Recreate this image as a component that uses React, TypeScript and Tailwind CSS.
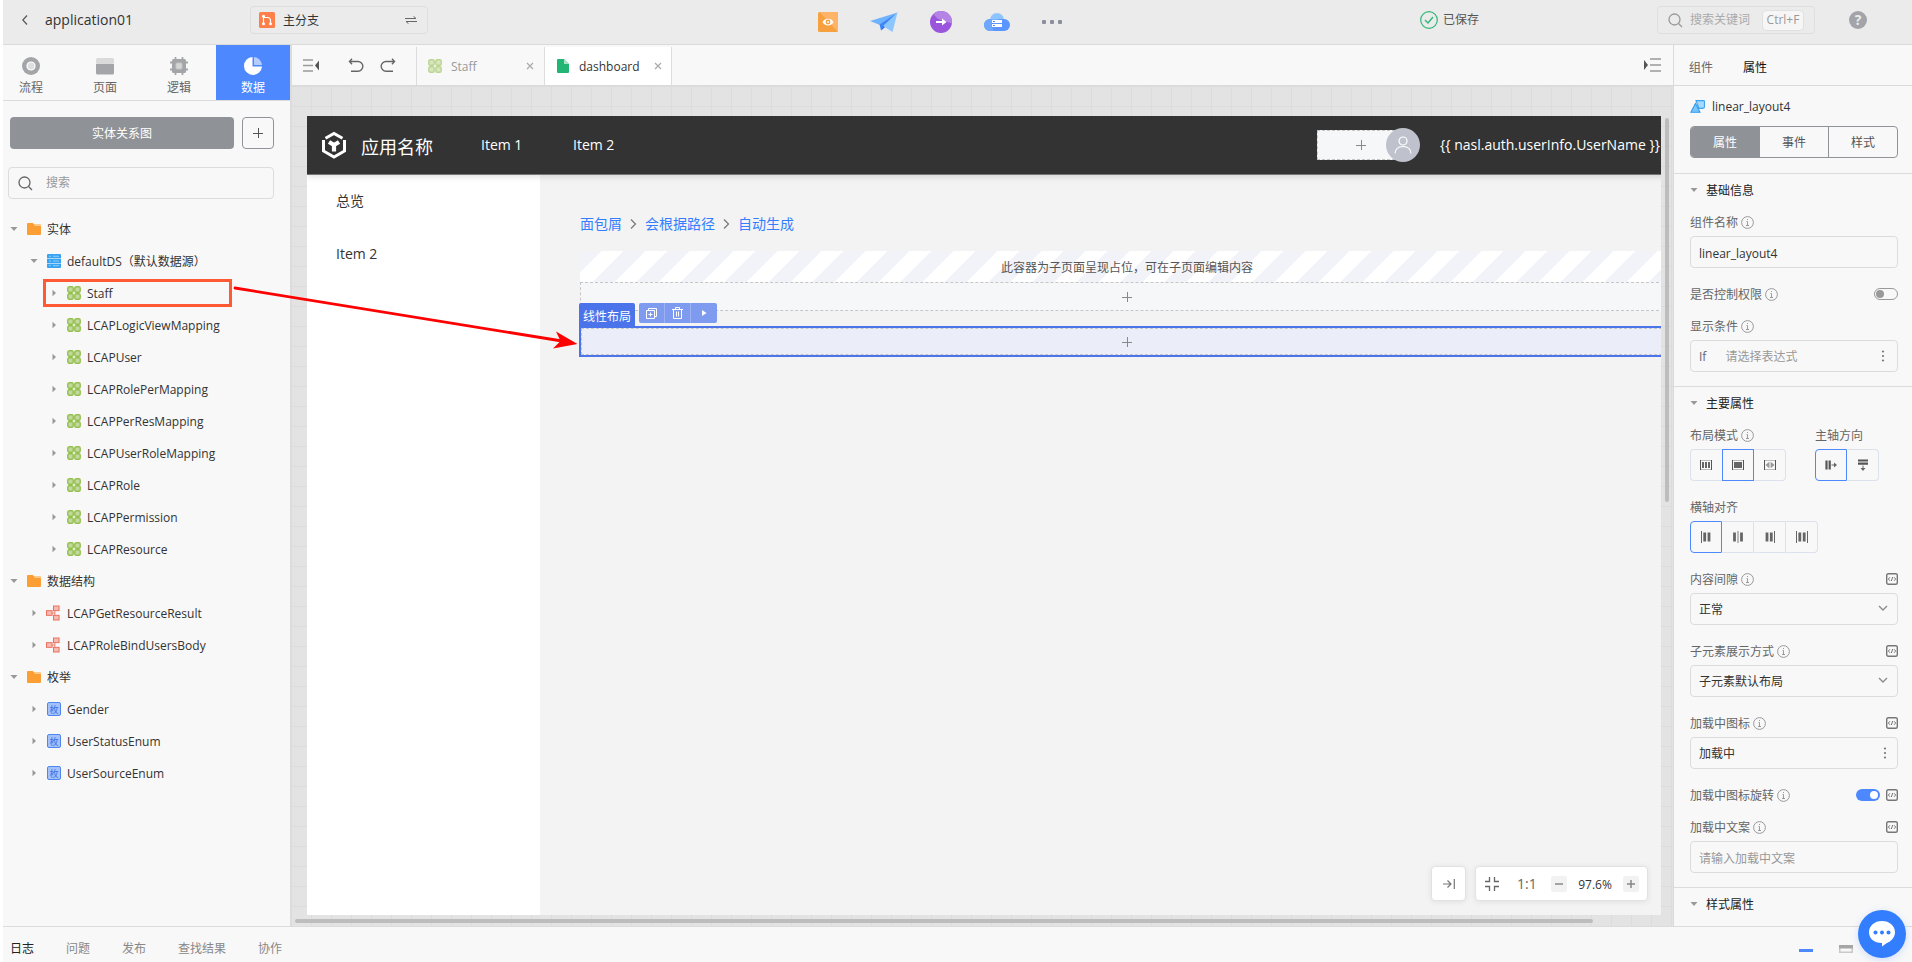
import type { ReactNode } from 'react'

type IconProps = { className?: string }

/* ---------- icons ---------- */

function EntityIcon({ className = '' }: IconProps) {
  return (
    <svg width="14" height="14" viewBox="0 0 14 14" className={`shrink-0 ${className}`}>
      {[0.8, 7.8].map((y) =>
        [0.8, 7.8].map((x) => (
          <rect key={`${x}-${y}`} x={x} y={y} width="5.4" height="5.4" rx="1.5" fill="#c3d9a0" stroke="#94bf4c" strokeWidth="1.4" />
        )),
      )}
    </svg>
  )
}

function FolderIcon() {
  return (
    <svg width="14" height="14" viewBox="0 0 14 14" className="shrink-0">
      <path d="M6 2h7a1 1 0 0 1 1 1v4H6z" fill="#fdc98a" />
      <path d="M0 2a1 1 0 0 1 1-1h5l2 3h5a1 1 0 0 1 1 1v7a1 1 0 0 1-1 1H1a1 1 0 0 1-1-1z" fill="#fb9e33" />
    </svg>
  )
}

function DatabaseIcon() {
  return (
    <svg width="14" height="14" viewBox="0 0 14 14" className="shrink-0">
      <rect width="14" height="14" rx="1" fill="#36a3f3" />
      <path d="M0 4.5h14M0 9.5h14" stroke="#a9d8fb" />
      <path d="M2 2.3h2M2 7h2M2 11.7h2M6 2.3h6M6 7h6M6 11.7h6" stroke="#8fcbf9" strokeWidth="1" />
    </svg>
  )
}

function StructIcon() {
  return (
    <svg width="14" height="16" viewBox="0 0 15 16" className="-ml-px shrink-0">
      <path d="M6 8h3.5M9.5 3.5v9M8 3.5h2M8 12.5h2" stroke="#ee7b6c" fill="none" />
      <g fill="#f7b9b0" stroke="#ea6a59">
        <rect x=".5" y="5.5" width="6" height="5" />
        <rect x="8" y=".5" width="6" height="5" />
        <rect x="8" y="10.5" width="6" height="5" />
      </g>
    </svg>
  )
}

function EnumIcon() {
  return (
    <span className="flex size-3.5 shrink-0 items-center justify-center rounded-xs border border-[#4e86f2] bg-[#a5c1f8] text-[9px] leading-none text-[#3472ee]">
      枚
    </span>
  )
}

function Caret({ open }: { open: boolean }) {
  return (
    <svg width="8" height="8" viewBox="0 0 8 8" className="shrink-0" fill="#999">
      {open ? <path d="M.5 2h7L4 6z" /> : <path d="M2.5 .8v6.4L6 4z" />}
    </svg>
  )
}

function InfoIcon() {
  return (
    <svg width="13" height="13" viewBox="0 0 13 13" className="shrink-0" fill="none" stroke="#8f8f8f">
      <circle cx="6.5" cy="6.5" r="5.9" strokeWidth=".9" />
      <path d="M5.5 5.5h1v3.8M5 9.5h3M6 3.5h1" strokeWidth=".9" />
    </svg>
  )
}

function CodeIcon() {
  return (
    <svg width="12" height="12" viewBox="0 0 12 12" className="shrink-0" fill="none" stroke="#777">
      <rect x=".7" y=".7" width="10.6" height="10.6" rx="1.5" strokeWidth="1.4" />
      <path d="M4 4.2L2.3 6 4 7.8M8 4.2L9.7 6 8 7.8M6.7 4L5.3 8" strokeWidth="1" />
    </svg>
  )
}

function DotsIcon() {
  return (
    <svg width="4" height="12" viewBox="0 0 4 12" className="shrink-0" fill="#777">
      <circle cx="2" cy="1.5" r="1.1" />
      <circle cx="2" cy="6" r="1.1" />
      <circle cx="2" cy="10.5" r="1.1" />
    </svg>
  )
}

function SearchIcon({ className = '' }: IconProps) {
  return (
    <svg width="15" height="15" viewBox="0 0 15 15" className={`shrink-0 ${className}`} fill="none" stroke="currentColor" strokeWidth="1.3">
      <circle cx="6.5" cy="6.5" r="5.5" />
      <path d="M10.8 10.8L14 14" />
    </svg>
  )
}

function ChevronDown() {
  return (
    <svg width="10" height="6" viewBox="0 0 10 6" className="pointer-events-none absolute top-3 right-2.5" fill="none" stroke="#8c8c8c" strokeWidth="1.4">
      <path d="M1 1l4 4 4-4" />
    </svg>
  )
}

function PlusIcon({ className = '' }: IconProps) {
  return (
    <svg width="10" height="10" viewBox="0 0 10 10" className={`shrink-0 ${className}`} stroke="currentColor">
      <path d="M0 5.5h10M5.5 0v10" />
    </svg>
  )
}

function CloseIcon() {
  return (
    <svg width="8" height="8" viewBox="0 0 8 8" stroke="#aaa" strokeWidth="1.2">
      <path d="M1 1l6 6M7 1L1 7" />
    </svg>
  )
}

/* ---------- top bar ---------- */

function TopBar() {
  return (
    <header className="grid h-[45px] shrink-0 grid-cols-[813fr_auto_848fr] items-center border-b border-[#dadada] bg-[#ebebeb]">
      <div className="flex items-center pb-1">
        <button aria-label="返回" className="ml-4 flex size-3 items-center justify-center">
          <svg width="6" height="10" viewBox="0 0 6 10" fill="none" stroke="#555" strokeWidth="1.2">
            <path d="M5 .5L.8 5 5 9.5" />
          </svg>
        </button>
        <h1 className="ml-3.5 w-[205px] text-sm leading-5 text-[#333]">application01</h1>
        <button className="flex h-7 w-[178px] items-center rounded-sm border border-[#dedede] px-2 text-left text-xs text-[#333]">
          <svg width="16" height="16" viewBox="0 0 16 16" className="shrink-0">
            <rect width="16" height="16" rx="1.5" fill="#ff7f4a" />
            <path d="M4.5 5v6M4.5 5.5h4a3 3 0 0 1 3 3V11" fill="none" stroke="#fff" strokeWidth="1.1" />
            <g fill="#fff">
              <circle cx="4.5" cy="4.3" r="1.5" />
              <circle cx="4.5" cy="11.7" r="1.5" />
              <circle cx="11.5" cy="11.7" r="1.5" />
            </g>
          </svg>
          <span className="ml-2 grow pt-0.5">主分支</span>
          <svg width="12" height="8" viewBox="0 0 12 8" className="mr-0.5" fill="none" stroke="#666">
            <path d="M0 2.5h11L8.5 .3M12 5.5H1l2.5 2.2" />
          </svg>
        </button>
      </div>

      <nav aria-label="发布工具" className="flex items-center gap-8">
        <button aria-label="预览">
          <svg width="20" height="20" viewBox="0 0 20 20">
            <rect width="20" height="20" rx="1.5" fill="#f7a040" />
            <path d="M1.5 0h17A1.5 1.5 0 0 1 20 1.5V20z" fill="#ffb368" />
            <path d="M4.5 10C6.5 5.5 13.5 5.5 15.5 10 13.5 14.5 6.500 14.5 4.5 10z" fill="#fff" />
            <circle cx="10" cy="10" r="2.4" fill="#f7a040" />
            <circle cx="10" cy="10" r="1" fill="#fff" />
          </svg>
        </button>
        <button aria-label="发布">
          <svg width="28" height="21" viewBox="0 0 28 21">
            <path d="M27.5 .5L0 9l10 4z" fill="#6fb3ff" />
            <path d="M27.5 .5L9.500 12.500l1.500 6z" fill="#3f86f7" />
            <path d="M27.5 .5L13 14l9.5 6z" fill="#8cc6ff" />
            <path d="M13 14l-2 4.500 4-3.300z" fill="#2f6ff0" />
          </svg>
        </button>
        <button aria-label="导出">
          <svg width="22" height="22" viewBox="0 0 22 22">
            <circle cx="11" cy="11" r="11" fill="#9a55dc" />
            <path d="M3.3 3.2A11 11 0 0 1 21.9 12.5L8 8z" fill="#b583e6" />
            <path d="M6 10h6V7.500l4.500 3.500-4.500 3.500V12H6z" fill="#fff" />
          </svg>
        </button>
        <button aria-label="部署">
          <svg width="26" height="18" viewBox="0 0 26 18">
            <circle cx="13" cy="7" r="7" fill="#8ec5ff" />
            <path d="M6 6h14a6 6 0 0 1 0 12H6A6 6 0 0 1 6 6z" fill="#5b95ff" />
            <path d="M6 6a6 6 0 0 0 0 12h4C7 14 7 10 10 6z" fill="#6fa8ff" />
            <path d="M7 6a7 7 0 0 1 12 0c-4-1-5 2-12 0z" fill="#8ec5ff" />
            <path d="M8 7h10v3H8zM8 11h10v3H8z" fill="#fff" />
            <path d="M9 8.500h2M9 12.500h2" stroke="#4f86f5" />
          </svg>
        </button>
        <button aria-label="更多">
          <svg width="20" height="4" viewBox="0 0 20 4" fill="#8c8f9e">
            <rect width="4" height="4" rx="1" />
            <rect x="8" width="4" height="4" rx="1" />
            <rect x="16" width="4" height="4" rx="1" />
          </svg>
        </button>
      </nav>

      <div className="flex items-center justify-end pb-1">
        <div className="mr-[178px] flex items-center gap-[5px] text-xs text-[#555]">
          <svg width="18" height="18" viewBox="0 0 18 18" fill="none" stroke="#2fb678" strokeWidth="1.2">
            <circle cx="9" cy="9" r="8.3" />
            <path d="M5 9l3 3 5-6" strokeWidth="1.4" />
          </svg>
          已保存
        </div>
        <label className="flex h-7 w-[158px] items-center rounded-sm border border-[#dedede] px-2.5 text-[#999]">
          <SearchIcon />
          <input aria-label="搜索关键词" placeholder="搜索关键词" className="ml-[7px] w-0 grow bg-transparent text-xs outline-none placeholder:text-[#aaa]" />
          <kbd className="flex h-[21px] w-[42px] items-center justify-center rounded-sm border border-[#e0e0e0] bg-[#f6f6f6] text-xs text-[#999] [font-family:'Open_Sans',sans-serif]">
            Ctrl+F
          </kbd>
        </label>
        <button aria-label="帮助" className="mr-[45px] ml-[34px] flex size-[18px] items-center justify-center rounded-full bg-[#a3a4a9] text-sm leading-none font-bold text-[#ebebeb]">
          ?
        </button>
      </div>
    </header>
  )
}

/* ---------- left panel ---------- */

const modules: { label: string; icon: ReactNode; active?: boolean }[] = [
  {
    label: '流程',
    icon: (
      <svg width="18" height="18" viewBox="0 0 18 18">
        <circle cx="9" cy="9" r="9" fill="#a3a5a8" />
        <circle cx="9" cy="9" r="4" fill="#dedede" stroke="#fff" strokeWidth="1.2" />
      </svg>
    ),
  },
  {
    label: '页面',
    icon: (
      <svg width="18" height="18" viewBox="0 0 18 18">
        <rect y="1" width="18" height="6" rx="1.5" fill="#dadada" />
        <path d="M0 7h18v9a1.500 1.500 0 0 1-1.500 1.500h-15A1.500 1.500 0 0 1 0 16z" fill="#a3a5a8" />
      </svg>
    ),
  },
  {
    label: '逻辑',
    icon: (
      <svg width="18" height="18" viewBox="0 0 18 18">
        <path d="M5.5 0v18M12.500 0v18M0 5.500h18M0 12.500h18" stroke="#a3a5a8" strokeWidth="1.8" />
        <rect x="2" y="2" width="14" height="14" rx="1.5" fill="#a3a5a8" />
        <rect x="6" y="6" width="6" height="6" rx="1" fill="#d5d5d5" stroke="#c4c4c4" />
      </svg>
    ),
  },
  {
    label: '数据',
    active: true,
    icon: (
      <svg width="18" height="18" viewBox="0 0 18 18">
        <path d="M8.500 0A9 9 0 1 0 18 9.500H8.500z" fill="#fff" />
        <path d="M10 0a9 9 0 0 1 8 8h-8z" fill="#b4ccff" />
      </svg>
    ),
  },
]

type TreeNode = { label: string; level: 0 | 1 | 2; kind: 'folder' | 'db' | 'entity' | 'struct' | 'enum'; marked?: boolean }

const tree: TreeNode[] = [
  { label: '实体', level: 0, kind: 'folder' },
  { label: 'defaultDS（默认数据源）', level: 1, kind: 'db' },
  { label: 'Staff', level: 2, kind: 'entity', marked: true },
  { label: 'LCAPLogicViewMapping', level: 2, kind: 'entity' },
  { label: 'LCAPUser', level: 2, kind: 'entity' },
  { label: 'LCAPRolePerMapping', level: 2, kind: 'entity' },
  { label: 'LCAPPerResMapping', level: 2, kind: 'entity' },
  { label: 'LCAPUserRoleMapping', level: 2, kind: 'entity' },
  { label: 'LCAPRole', level: 2, kind: 'entity' },
  { label: 'LCAPPermission', level: 2, kind: 'entity' },
  { label: 'LCAPResource', level: 2, kind: 'entity' },
  { label: '数据结构', level: 0, kind: 'folder' },
  { label: 'LCAPGetResourceResult', level: 1, kind: 'struct' },
  { label: 'LCAPRoleBindUsersBody', level: 1, kind: 'struct' },
  { label: '枚举', level: 0, kind: 'folder' },
  { label: 'Gender', level: 1, kind: 'enum' },
  { label: 'UserStatusEnum', level: 1, kind: 'enum' },
  { label: 'UserSourceEnum', level: 1, kind: 'enum' },
]

const nodeIcons = {
  folder: <FolderIcon />,
  db: <DatabaseIcon />,
  entity: <EntityIcon />,
  struct: <StructIcon />,
  enum: <EnumIcon />,
}

const indents = ['pl-[7px]', 'pl-[27px]', 'pl-[47px]']

function LeftPanel() {
  return (
    <aside className="flex w-[289px] shrink-0 flex-col border-r-2 border-[#dcdcdc] bg-[#f8f8f8]">
      <nav aria-label="模块" className="flex h-14 shrink-0 justify-end overflow-hidden border-b border-[#dcdcdc]">
        {modules.map((m) => (
          <button
            key={m.label}
            className={`flex w-[74px] shrink-0 flex-col items-center gap-[3px] pt-3 text-xs leading-5 ${m.active ? 'bg-[#4d88ff] text-white' : 'text-[#666]'}`}
          >
            {m.icon}
            {m.label}
          </button>
        ))}
      </nav>

      <div className="flex gap-2 pt-4 pr-4 pl-[7px]">
        <button className="h-8 grow rounded-sm bg-[#8f9398] pt-0.5 text-xs text-white">实体关系图</button>
        <button aria-label="新建" className="flex size-8 items-center justify-center rounded-sm border border-[#8f9398] text-[#555]">
          <PlusIcon />
        </button>
      </div>

      <label className="mt-[18px] mr-4 ml-[5px] flex h-8 items-center rounded-sm border border-[#dcdcdc] pl-[9px] text-[#666]">
        <SearchIcon />
        <input aria-label="搜索" placeholder="搜索" className="ml-[13px] w-0 grow bg-transparent text-xs outline-none placeholder:text-[#999]" />
      </label>

      <ul className="mt-3.5 text-xs text-[#333]">
        {tree.map((n) => (
          <li key={n.label} className={`relative flex h-8 items-center ${indents[n.level]}`}>
            <Caret open={n.kind === 'folder' || n.kind === 'db'} />
            <span className="ml-[9px] flex w-5 shrink-0 items-center">{nodeIcons[n.kind]}</span>
            <span className="pt-0.5">{n.label}</span>
            {n.marked && <span className="absolute inset-y-0.5 right-[58px] left-10 border-[3px] border-[#ff5a34]" />}
          </li>
        ))}
      </ul>
    </aside>
  )
}

/* ---------- centre ---------- */

function EditorBar() {
  return (
    <div className="flex h-[41px] shrink-0 items-end border-b border-[#dadada] bg-[#f8f8f8]">
      <div className="flex h-10 w-[124px] shrink-0 items-center pl-[11px]">
        <button aria-label="收起左侧">
          <svg width="17" height="13" viewBox="0 0 17 13">
            <path d="M0 1h10M0 6.500h10M0 12h10" stroke="#999" strokeWidth="1.6" />
            <path d="M16 1.500v10L12 6.500z" fill="#555" />
          </svg>
        </button>
        <button aria-label="撤销" className="ml-7">
          <svg width="16" height="15" viewBox="0 0 16 15" fill="none" stroke="#666" strokeWidth="1.4">
            <path d="M4 .8L1.500 3.500 4 6.200M1.500 3.500h8.500a4.700 4.700 0 0 1 0 9.700H3" />
          </svg>
        </button>
        <button aria-label="重做" className="ml-4">
          <svg width="16" height="15" viewBox="0 0 16 15" fill="none" stroke="#666" strokeWidth="1.4">
            <path d="M12 .8l2.500 2.700L12 6.200M14.500 3.500H6a4.700 4.700 0 0 0 0 9.700h7" />
          </svg>
        </button>
      </div>
      <div className="flex h-[38px] w-[128px] shrink-0 items-center border-l border-[#dcdcdc] pr-2.5 pl-[11px] text-xs text-[#999]">
        <EntityIcon className="opacity-60" />
        <span className="ml-[9px] grow pt-0.5">Staff</span>
        <button aria-label="关闭 Staff">
          <CloseIcon />
        </button>
      </div>
      <div className="flex h-[38px] w-[128px] shrink-0 items-center border-x border-[#dcdcdc] bg-white pr-[9px] pl-3 text-xs text-[#333]">
        <svg width="12" height="14" viewBox="0 0 12 14" className="shrink-0">
          <path d="M0 1a1 1 0 0 1 1-1h6l5 5v8a1 1 0 0 1-1 1H1a1 1 0 0 1-1-1z" fill="#22b573" />
          <path d="M7 0l5 5H7z" fill="#a9e3c7" />
        </svg>
        <span className="ml-2.5 grow pt-0.5">dashboard</span>
        <button aria-label="关闭 dashboard">
          <CloseIcon />
        </button>
      </div>
      <div className="flex h-10 grow items-center justify-end pr-3">
        <button aria-label="收起右侧">
          <svg width="17" height="14" viewBox="0 0 17 14">
            <path d="M6 1h11M6 7h11M6 13h11" stroke="#999" strokeWidth="1.6" />
            <path d="M0 2v10L4 7z" fill="#555" />
          </svg>
        </button>
      </div>
    </div>
  )
}

function DropSlot({ className }: { className: string }) {
  return (
    <div className={`flex items-center justify-center border border-dashed border-[#c6c6c6] text-[#888] ${className}`}>
      <PlusIcon />
    </div>
  )
}

function PageHeader() {
  return (
    <div className="relative z-10 flex h-[59px] shrink-0 items-center border-b border-[#777] bg-[#333] text-sm text-white shadow-[0_2px_6px_rgba(0,0,0,0.12)]">
      <svg width="26" height="28" viewBox="0 0 26 28" className="ml-3.5 shrink-0" fill="none" stroke="#fff">
        <path d="M4.500 7.200L13 2.400l8.500 4.800" strokeWidth="3" />
        <path d="M2.500 9v11L13 26l10.500-6V9" strokeWidth="3" />
        <path d="M13 20.500v-6.500L8 11M13 14l5-3" strokeWidth="4.200" />
      </svg>
      <span className="ml-3.5 w-[120px] shrink-0 pt-1 text-lg leading-6">应用名称</span>
      <span className="w-[92px] shrink-0">Item 1</span>
      <span className="shrink-0">Item 2</span>
      <div className="ml-auto flex shrink-0 items-center">
        <DropSlot className="h-[30px] w-[88px] bg-[#f6f7f9]" />
        <span className="-ml-[19px] flex size-[34px] items-center justify-center rounded-full bg-[#bfc2cc]">
          <svg width="18" height="18" viewBox="0 0 18 18" fill="none" stroke="#fff" strokeWidth="1.2">
            <circle cx="9" cy="5" r="4" />
            <path d="M1 17.500C1.500 12 5 10.500 9 10.500s7.500 1.500 8 7" />
          </svg>
        </span>
        <span className="ml-5 w-[274px] whitespace-nowrap">{'{{ nasl.auth.userInfo.UserName }}'}</span>
      </div>
    </div>
  )
}

function Crumbs() {
  const items = ['面包屑', '会根据路径', '自动生成']
  return (
    <nav aria-label="面包屑" className="flex h-5 items-center text-sm text-[#337eff]">
      {items.map((text, i) => (
        <span key={text} className="flex items-center">
          {i > 0 && (
            <svg width="7" height="10" viewBox="0 0 7 10" className="mx-2" fill="none" stroke="#777" strokeWidth="1.2">
              <path d="M1 .5L5.500 5 1 9.500" />
            </svg>
          )}
          <a href="#">{text}</a>
        </span>
      ))}
    </nav>
  )
}

function SelectedLayout() {
  return (
    <div className="relative mt-[15px] -ml-px border-2 border-[#4b73ea]">
      <DropSlot className="h-[27px] bg-[#ebeef8]" />
      <div className="absolute bottom-full -left-0.5 flex items-start gap-1">
        <span className="flex h-[25px] w-14 items-center justify-center rounded-t-xs bg-[#4b73ea] pt-0.5 text-xs whitespace-nowrap text-white">线性布局</span>
        <div className="flex h-5 divide-x divide-[#9db2f4] rounded-xs bg-[#7f9bf0] text-white">
          <button aria-label="复制" className="flex w-[26px] items-center justify-center">
            <svg width="11" height="11" viewBox="0 0 11 11" fill="none" stroke="#fff">
              <path d="M2.500 2.500V.5h8v8h-2M.5 2.500h8v8h-8zM4.500 4.500v4M2.500 6.500h4" />
            </svg>
          </button>
          <button aria-label="删除" className="flex w-[26px] items-center justify-center">
            <svg width="11" height="12" viewBox="0 0 11 12" fill="none" stroke="#fff">
              <path d="M0 2.500h11M3.500 2.500v-2h4v2M1.500 2.500v9h8v-9M4.500 4.500v5M6.500 4.500v5" />
            </svg>
          </button>
          <button aria-label="展开" className="flex w-[26px] items-center justify-center">
            <svg width="5" height="6" viewBox="0 0 5 6" fill="#fff">
              <path d="M0 0l4.500 3L0 6z" />
            </svg>
          </button>
        </div>
      </div>
    </div>
  )
}

function ZoomTools() {
  const box = 'flex h-[35px] items-center rounded-sm border border-[#e2e2e2] bg-white shadow-[0_1px_6px_rgba(0,0,0,0.08)]'
  return (
    <div className="absolute right-[25px] bottom-[25px] z-20 flex gap-[9px]">
      <button aria-label="定位" className={`w-[35px] justify-center ${box}`}>
        <svg width="12" height="10" viewBox="0 0 12 10" fill="none" stroke="#777" strokeWidth="1.2">
          <path d="M0 5h8M4.500 1.500L8 5 4.500 8.500M11.300 0v10" />
        </svg>
      </button>
      <div className={`w-[173px] px-2 ${box}`}>
        <button aria-label="适应窗口" className="ml-px">
          <svg width="14" height="14" viewBox="0 0 14 14" fill="none" stroke="#666" strokeWidth="1.3">
            <path d="M0 4.500h4.500V0M9.500 0v4.500H14M0 9.500h4.500V14M9.500 14V9.500H14" />
          </svg>
        </button>
        <button className="ml-[18px] text-sm text-[#666]">1:1</button>
        <button aria-label="缩小" className="ml-auto flex size-4 items-center justify-center rounded-xs bg-[#f2f2f2]">
          <svg width="8" height="8" viewBox="0 0 8 8" stroke="#888" strokeWidth="1.5">
            <path d="M0 4h8" />
          </svg>
        </button>
        <span className="w-14 pt-0.5 text-center text-xs text-[#333]">97.6%</span>
        <button aria-label="放大" className="flex size-4 items-center justify-center rounded-xs bg-[#f2f2f2]">
          <svg width="8" height="8" viewBox="0 0 8 8" stroke="#888" strokeWidth="1.5">
            <path d="M0 4h8M4 0v8" />
          </svg>
        </button>
      </div>
    </div>
  )
}

function Canvas() {
  return (
    <div className="relative flex min-h-0 grow flex-col bg-[#e3e3e3] bg-[linear-gradient(#dcdcdc_1px,transparent_1px),linear-gradient(90deg,#dcdcdc_1px,transparent_1px)] bg-[size:20px_20px] bg-[position:-1px_0px] pt-[30px] pr-3 pb-[11px] pl-[15px]">
      <div className="min-h-0 grow overflow-hidden bg-[#f3f3f3]">
        <div className="flex h-full w-[calc(100%+53px)] flex-col">
          <PageHeader />
          <div className="flex min-h-0 grow">
            <ul className="w-[233px] shrink-0 bg-white px-[29px] text-sm text-[#333]">
              <li className="flex h-[52px] items-center">总览</li>
              <li className="flex h-[53px] items-center">Item 2</li>
            </ul>
            <main className="grow px-10 pt-[39px]">
              <Crumbs />
              <div className="mt-[17px] flex h-[31px] items-center justify-center bg-[linear-gradient(135deg,#f2f3f8_25%,#fff_25%,#fff_50%,#f2f3f8_50%,#f2f3f8_75%,#fff_75%)] bg-[size:44px_44px] pt-0.5 text-xs text-[#555]">
                此容器为子页面呈现占位，可在子页面编辑内容
              </div>
              <DropSlot className="h-[29px] bg-[#f6f7f9]" />
              <SelectedLayout />
            </main>
          </div>
        </div>
      </div>
      <span className="absolute bottom-[3px] left-[3px] h-1 w-[94%] rounded-full bg-[#bdbdbd]" />
      <span className="absolute top-8 right-1 h-[384px] w-1 rounded-full bg-[#bdbdbd]" />
      <ZoomTools />
    </div>
  )
}

/* ---------- right panel ---------- */

const boxClass = 'h-8 w-full rounded-sm border border-[#dcdcdc] bg-transparent px-2 pt-0.5 text-xs text-[#333] outline-none placeholder:text-[#999]'

function Label({ id, text, info = true, children }: { id?: string; text: string; info?: boolean; children?: ReactNode }) {
  return (
    <div className="flex h-5 items-center gap-[3px] text-xs text-[#666]">
      <label htmlFor={id} className="pt-0.5">
        {text}
      </label>
      {info && <InfoIcon />}
      <span className="ml-auto flex items-center gap-1.5">{children}</span>
    </div>
  )
}

function Field(props: { id?: string; text: string; info?: boolean; code?: boolean; children: ReactNode }) {
  return (
    <div className="flex flex-col gap-1">
      <Label id={props.id} text={props.text} info={props.info}>
        {props.code && <CodeIcon />}
      </Label>
      <div className="relative">{props.children}</div>
    </div>
  )
}

function Section({ title, children }: { title: string; children?: ReactNode }) {
  return (
    <section className="border-t border-[#dcdcdc] pr-3.5 pl-4">
      <h2 className="flex h-8 items-center gap-2 text-xs text-[#222]">
        <Caret open />
        <span className="pt-0.5">{title}</span>
      </h2>
      {children && <div className="flex flex-col gap-4 pt-1.5 pb-3.5">{children}</div>}
    </section>
  )
}

function IconButtons({ items, active }: { items: { name: string; art: ReactNode }[]; active: number }) {
  return (
    <div className="flex">
      {items.map((it, i) => (
        <button
          key={it.name}
          aria-label={it.name}
          className={`flex size-8 items-center justify-center border first:rounded-l-sm last:rounded-r-sm ${
            i === active ? 'border-[#4d88ff]' : i < active ? 'border-[#dde1ec] border-r-transparent' : 'border-[#dde1ec] border-l-transparent'
          }`}
        >
          <svg width="12" height="12" viewBox="0 0 12 12">
            {it.art}
          </svg>
        </button>
      ))}
    </div>
  )
}

const frame = (
  <>
    <path d="M0 1.500h12M0 10.500h12" stroke="#bbb" />
    <path d="M.5 1v10M11.500 1v10" stroke="#555" />
  </>
)

const layoutModes = [
  { name: '行内', art: <>{frame}<path d="M3 3v6M6 3v6M9 3v6" stroke="#555" strokeWidth="1.8" /></> },
  { name: '块级', art: <>{frame}<rect x="2" y="3" width="8" height="6" fill="#666" /></> },
  { name: '居中', art: <>{frame}<path d="M1.500 6L5 3v6zM10.500 6L7 3v6z" fill="#999" /><path d="M6 3v6" stroke="#aaa" /></> },
]
const directions = [
  { name: '水平', art: <><path d="M1.500 1.500v9M4.700 1.500v9" stroke="#555" strokeWidth="2.2" /><path d="M6.500 6h3" stroke="#666" /><path d="M9 3.500L12 6 9 8.500z" fill="#666" /></> },
  { name: '垂直', art: <><path d="M1 1.500h10M1 4.700h10" stroke="#555" strokeWidth="2.2" /><path d="M6 6.500v3" stroke="#666" /><path d="M3.500 9L6 12l2.500-3z" fill="#666" /></> },
]
const aligns = [
  { name: '左对齐', art: <><path d="M1.500 0v12" stroke="#666" /><path d="M4.700 1.500v9M9 1.500v9" stroke="#666" strokeWidth="2.8" /></> },
  { name: '居中对齐', art: <><path d="M6 0v12" stroke="#999" strokeWidth="1.3" /><path d="M2.500 1.500v9M9.500 1.500v9" stroke="#666" strokeWidth="2.8" /></> },
  { name: '右对齐', art: <><path d="M10.500 0v12" stroke="#666" /><path d="M3 1.500v9M7.300 1.500v9" stroke="#666" strokeWidth="2.8" /></> },
  { name: '两端对齐', art: <><path d="M.5 0v12M11.500 0v12" stroke="#666" /><path d="M3.800 1.500v9M8.200 1.500v9" stroke="#666" strokeWidth="2.8" /></> },
]

function RightPanel() {
  return (
    <aside className="flex w-[239px] shrink-0 flex-col overflow-hidden border-l border-[#dadada] bg-[#f8f8f8]">
      <nav aria-label="面板" className="flex h-[41px] shrink-0 items-center gap-[30px] border-b border-[#dadada] pt-1.5 pl-[15px] text-xs">
        <button className="text-[#666]">组件</button>
        <button className="text-[#111]">属性</button>
      </nav>

      <div className="flex h-10 shrink-0 items-center gap-[7px] pl-4 text-xs text-[#333]">
        <svg width="15" height="13" viewBox="0 0 15 13">
          <path d="M6 .6h7.500a1 1 0 0 1 1 1v4.800a2 2 0 0 1-2 2H9z" fill="#a9d8fb" stroke="#36a3f3" strokeWidth="1.1" />
          <path d="M5.500 3.500L10 12.300H.8z" fill="#7cc4f9" stroke="#2a9bf2" strokeWidth="1.1" />
        </svg>
        <span className="pt-0.5">linear_layout4</span>
      </div>

      <div className="mr-3.5 mb-[15px] ml-4 flex h-8 shrink-0 divide-x divide-[#8f9398] overflow-hidden rounded-sm border border-[#8f9398] text-xs text-[#555]">
        <button className="flex-1 bg-[#8f9398] pt-0.5 text-white">属性</button>
        <button className="flex-1 pt-0.5">事件</button>
        <button className="flex-1 pt-0.5">样式</button>
      </div>

      <Section title="基础信息">
        <Field id="name" text="组件名称">
          <input id="name" defaultValue="linear_layout4" className={boxClass} />
        </Field>
        <div className="flex flex-col gap-3">
          <Label id="auth" text="是否控制权限">
            <input
              id="auth"
              type="checkbox"
              role="switch"
              className="h-3 w-6 appearance-none rounded-full border border-[#999] before:mt-px before:ml-px before:block before:size-2 before:rounded-full before:bg-[#999]"
            />
          </Label>
          <Field id="cond" text="显示条件">
            <div className="flex h-8 items-center rounded-sm border border-[#dcdcdc] pr-3 pl-2 text-xs text-[#666]">
              <span className="pt-0.5">If</span>
              <input id="cond" placeholder="请选择表达式" className="ml-[19px] w-0 grow bg-transparent pt-0.5 outline-none placeholder:text-[#999]" />
              <DotsIcon />
            </div>
          </Field>
        </div>
      </Section>

      <Section title="主要属性">
        <div className="flex gap-[29px]">
          <Field text="布局模式">
            <IconButtons items={layoutModes} active={1} />
          </Field>
          <Field text="主轴方向" info={false}>
            <IconButtons items={directions} active={0} />
          </Field>
        </div>
        <Field text="横轴对齐" info={false}>
          <IconButtons items={aligns} active={0} />
        </Field>
        <Field id="gap" text="内容间隙" code>
          <select id="gap" className={`appearance-none ${boxClass}`}>
            <option>正常</option>
          </select>
          <ChevronDown />
        </Field>
        <Field id="child" text="子元素展示方式" code>
          <select id="child" className={`appearance-none ${boxClass}`}>
            <option>子元素默认布局</option>
          </select>
          <ChevronDown />
        </Field>
        <Field id="icon" text="加载中图标" code>
          <div className="flex h-8 items-center rounded-sm border border-[#dcdcdc] pr-2.5 pl-2">
            <input id="icon" defaultValue="加载中" className="w-0 grow bg-transparent pt-0.5 text-xs text-[#333] outline-none" />
            <DotsIcon />
          </div>
        </Field>
        <div className="flex flex-col gap-3">
          <Label id="spin" text="加载中图标旋转">
            <input
              id="spin"
              type="checkbox"
              role="switch"
              defaultChecked
              className="h-3 w-6 appearance-none rounded-full bg-[#4d88ff] before:mt-0.5 before:ml-3.5 before:block before:size-2 before:rounded-full before:bg-white"
            />
            <CodeIcon />
          </Label>
          <Field id="copy" text="加载中文案" code>
            <input id="copy" placeholder="请输入加载中文案" className={boxClass} />
          </Field>
        </div>
      </Section>

      <Section title="样式属性" />
    </aside>
  )
}

/* ---------- bottom ---------- */

function BottomBar() {
  return (
    <footer className="flex h-9 shrink-0 items-center border-t border-[#dcdcdc] bg-[#f8f8f8] pt-2 pl-[7px] text-xs text-[#888]">
      <nav aria-label="日志面板" className="flex gap-8">
        <button className="text-[#222]">日志</button>
        <button>问题</button>
        <button>发布</button>
        <button>查找结果</button>
        <button>协作</button>
      </nav>
      <div className="mr-[59px] ml-auto flex items-center gap-[26px]">
        <button aria-label="最小化" className="mt-1 h-[3px] w-3.5 bg-[#4d88ff]" />
        <button aria-label="展开面板">
          <svg width="14" height="8" viewBox="0 0 14 8">
            <rect x=".75" y=".75" width="12.5" height="6.5" fill="#f8f8f8" stroke="#c9c9c9" strokeWidth="1.5" />
            <rect width="14" height="3.5" fill="#a6a6a6" />
          </svg>
        </button>
      </div>
    </footer>
  )
}

export default function App() {
  return (
    <div className="relative flex h-screen flex-col overflow-hidden bg-white pl-[3px] [font-family:'Open_Sans','Noto_Sans_CJK_SC',sans-serif]">
      <TopBar />
      <div className="flex min-h-0 grow">
        <LeftPanel />
        <div className="flex min-w-0 grow flex-col">
          <EditorBar />
          <Canvas />
        </div>
        <RightPanel />
      </div>
      <BottomBar />

      <svg className="pointer-events-none absolute top-[280px] left-[230px] z-30" width="350" height="80" viewBox="0 0 350 80">
        <path d="M5 8L332 61" stroke="#f00" strokeWidth="2.8" strokeLinecap="round" />
        <path d="M347.500 64L326 51.500l4.500 9.500-7.500 7.500z" fill="#f00" />
      </svg>

      <button aria-label="在线咨询" className="absolute right-[6px] bottom-1 z-30 flex size-12 items-center justify-center rounded-full bg-[#337eff] shadow-[0_2px_8px_rgba(51,126,255,0.2)]">
        <svg width="28" height="26" viewBox="0 0 28 26">
          <path d="M14 0c7.700 0 13 4.900 13 11.200 0 5.300-4.500 9.600-8.500 11L14 25.500V22C6 22 1 17.500 1 11.200 1 4.900 6.300 0 14 0z" fill="#fff" />
          <g fill="#337eff">
            <circle cx="7.500" cy="11.500" r="2" />
            <circle cx="14" cy="11.500" r="2" />
            <circle cx="20.500" cy="11.500" r="2" />
          </g>
        </svg>
      </button>
    </div>
  )
}
